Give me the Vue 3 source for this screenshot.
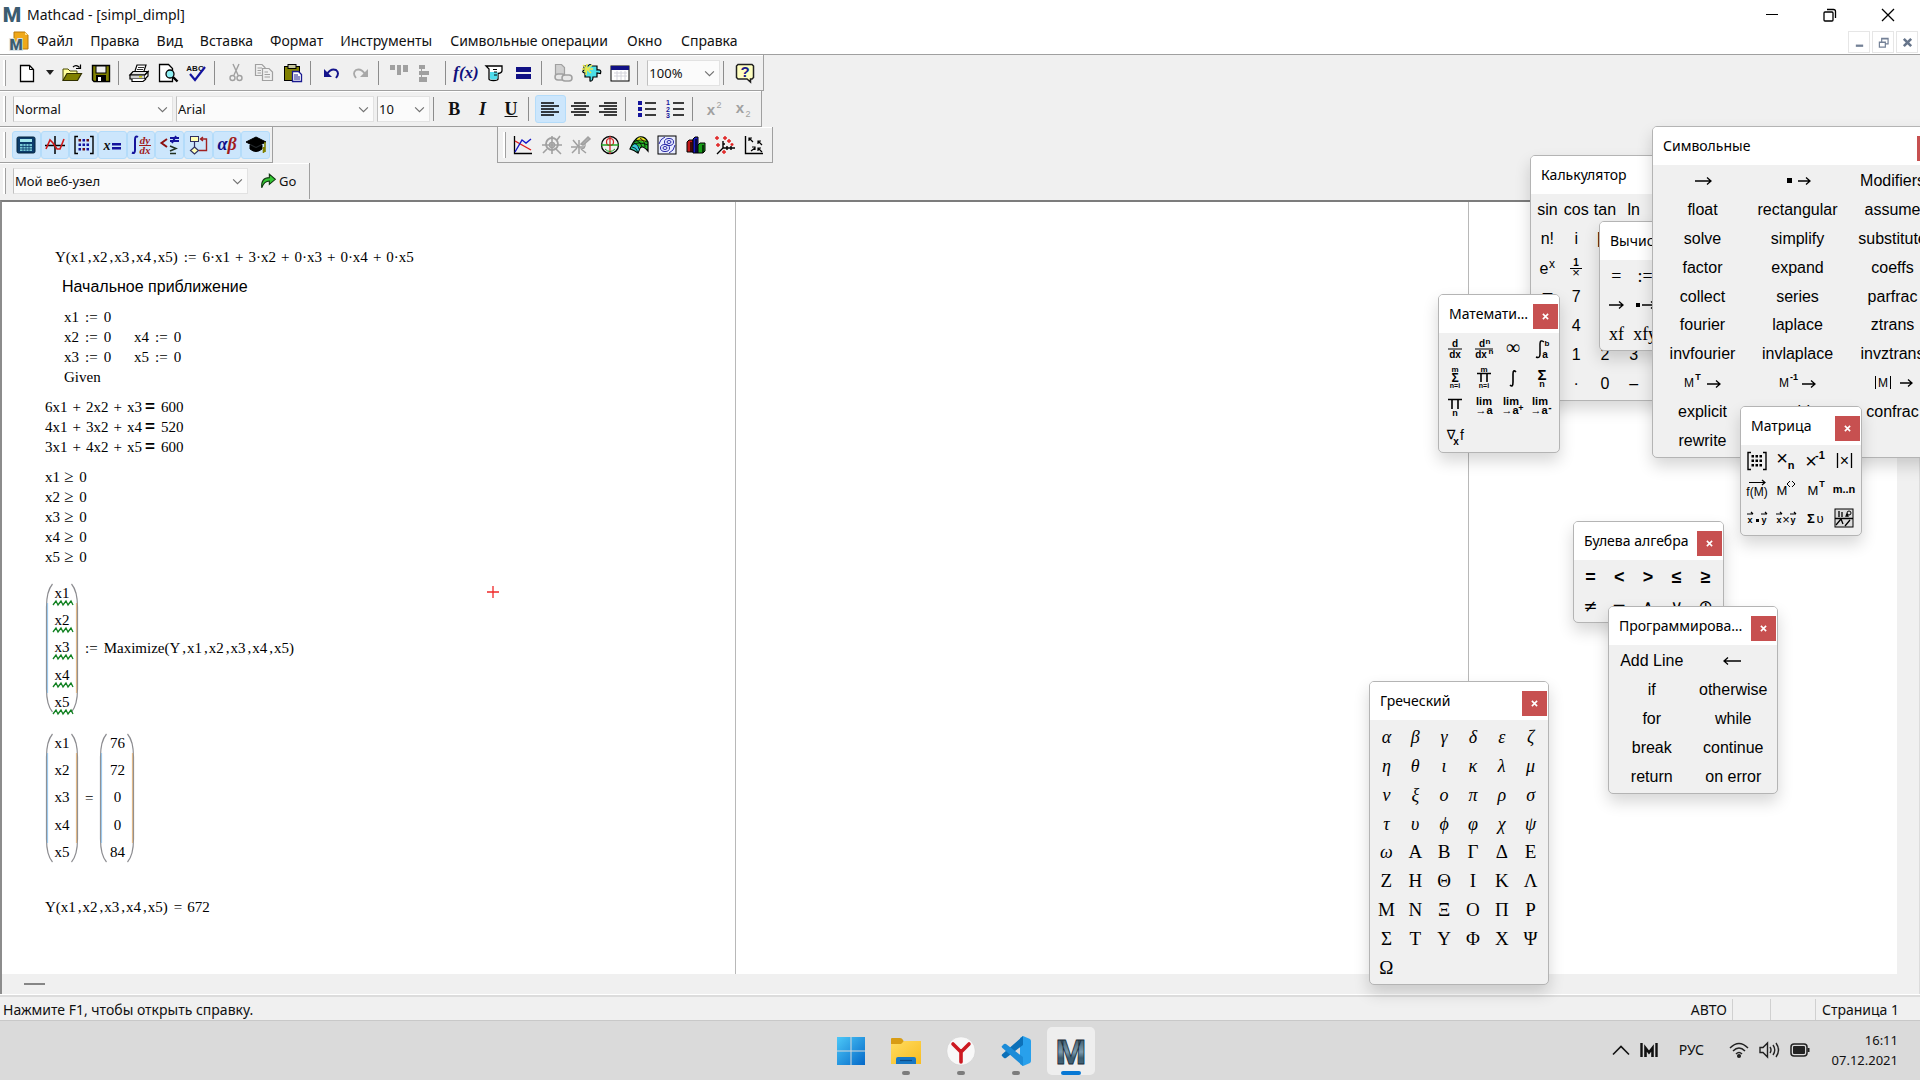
<script setup>
const menus = ['Файл', 'Правка', 'Вид', 'Вставка', 'Формат', 'Инструменты', 'Символьные операции', 'Окно', 'Справка']

/* ---------- icon helpers ---------- */
const t = (x, y, size, text, extra = '') =>
  `<text x="${x}" y="${y}" font-size="${size}" text-anchor="middle" fill="currentColor" ${extra}>${text}</text>`
const p = (d, stroke = '#000', w = 1, fill = 'none') =>
  `<path d="${d}" stroke="${stroke}" stroke-width="${w}" fill="${fill}"/>`
const r = (x, y, w, h, fill, stroke = 'none') =>
  `<rect x="${x}" y="${y}" width="${w}" height="${h}" fill="${fill}" stroke="${stroke}"/>`
const arrow = (x1, x2, y = 10) => {
  const s = Math.sign(x2 - x1)
  return p(`M${x1} ${y}H${x2}M${x2 - 4 * s} ${y - 3.5}L${x2} ${y}L${x2 - 4 * s} ${y + 3.5}`, '#000', 1.3)
}
const sans = 'font-family="Liberation Sans"'
const serif = 'font-family="Liberation Serif"'

const icons = {
  new: p('M3.5 2.5H12.5L16.5 6.5V18.5H3.5Z', '#000', 1.3, '#fff') + p('M12.5 2.5V6.5H16.5'),
  open: p('M1 17V6H6L8 8H15V10', '#4a4a00', 1, '#ffff9c') + p('M1 17.5L5 10.5H19.5L15.5 17.5Z', '#303000', 1.2, '#808000') + p('M11 4Q14 1 17.5 4.5M18.5 1.5V5.5H14', '#000', 1.2),
  save: p('M1.5 2.5H18.5V18.5H3L1.5 17Z', '#000', 1.4, '#808000') + r(5, 3, 10, 7, '#f0f0f0', '#000') + r(5, 12, 10, 6, '#000') + r(7, 14, 3, 4, '#fff'),
  print: p('M6 8L8 2H17L15 8', '#000', 1.2, '#fff') + p('M9 4.5H15M8 6.5H14', '#000', 0.8) + p('M1 12L4 8.5H19L16 12Z', '#000', 1.2, '#e4e4e4') + p('M1 12H16V16H1Z', '#000', 1.2, '#d0d0d0') + p('M16 12L19 8.5V13L16 16M3 16V18.5H14L17 16', '#000', 1.2, '#fff') + r(10, 13, 3, 1.5, '#c8c800'),
  preview: p('M1.5 1.5H10.5L14.5 5.5V18.5H1.5Z', '#000', 1.3, '#fff') + '<circle cx="12" cy="11" r="4" fill="#8ff0f4" stroke="#000" stroke-width="1.3"/>' + p('M15 14L19.5 18.5', '#000', 2.4),
  abc: t(8, 7.5, 8, 'ABC', `${sans} font-weight="700"`) + p('M3 11L8 17L18 4', '#1414a0', 2.2),
  cut: p('M7 1L12 12M13 1L8 12', '#a0a0a0', 1.4) + '<circle cx="6.500" cy="15" r="2.500" fill="none" stroke="#a0a0a0" stroke-width="1.400"/><circle cx="13.500" cy="15" r="2.500" fill="none" stroke="#a0a0a0" stroke-width="1.400"/>',
  copy: p('M1.500 1.500H8L11 4.500V12.500H1.500Z', '#a0a0a0', 1.2) + p('M8.500 5.500H15L18.500 9V17.500H8.500Z', '#a0a0a0', 1.2, '#f0f0f0') + p('M3.500 5H8M3.500 7.500H7M3.500 10H7M10.500 9H14M10.500 11.500H16M10.500 14H16', '#a0a0a0', 1),
  paste: r(1.5, 3.5, 15, 14, '#808000', '#000') + r(5, 1.5, 8, 4, '#c8c8a0', '#000') + p('M9.500 8.500H15.500L18.500 11.500V18.500H9.500Z', '#1a1a90', 1.3, '#fff') + p('M11 12H15M11 14H17M11 16H17', '#1a1a90', 1),
  undo: p('M5 11Q9 5 14 7Q18 10 14 15', '#14148c', 2) + p('M2 6V14H10Z', 'none', 0, '#14148c'),
  redo: p('M15 11Q11 5 6 7Q2 10 6 15', '#a8a8a8', 1.8) + p('M18 6V14H10Z', 'none', 0, '#a8a8a8'),
  alignTop: r(1, 2, 5, 5, '#a0a0a0') + r(8, 2, 4, 10, '#a0a0a0') + r(14, 2, 5, 7, '#a0a0a0'),
  alignLeft: r(1, 2, 6, 4, '#a0a0a0') + r(1, 8, 10, 4, '#a0a0a0') + r(1, 14, 8, 5, '#a0a0a0') + r(3, 6, 1, 8, '#a0a0a0'),
  fx: t(10, 15, 17, 'f(x)', `${serif} font-style="italic" font-weight="700" style="color:#10107c"`),
  cup: p('M1 3H17V7.500Q17 10 13 10.500V16Q13 17.500 8.500 17.500T4 16V6Z', '#000', 1.3, '#fff') + p('M5 9H12.500V15Q12 16.500 8.500 16.500T5 15Z', 'none', 0, '#50dcec') + p('M8 6.500H12M9 9H12M9 12H12', '#000', 1),
  equals: r(2, 4, 15, 5, '#101084') + r(2, 11, 15, 5, '#101084'),
  link: p('M2.500 1.500H8.500L11.500 4.500V11.500H2.500Z', '#a0a0a0', 1.2, '#d0d0d0') + '<rect x="2" y="11" width="10" height="6" rx="3" fill="#e8e8e8" stroke="#a0a0a0" stroke-width="1.500"/><rect x="9" y="12" width="10" height="6" rx="3" fill="#e8e8e8" stroke="#a0a0a0" stroke-width="1.500"/>',
  puzzle: p('M3 3H7Q9 0 11 3H16V7Q21 6 19.500 10.500L16 10V14H12Q12 18.500 9 18V14H4V10Q0 9 3 7Z', '#000', 1.2, '#4ce0e8') + p('M2 2L10 10M6 1L5 12M11 2L3 9M1 6H12', '#e8e850', 1.6),
  table: r(1, 3, 18, 15, '#fff', '#000') + r(1, 3, 18, 4, '#101084') + p('M4 10H17M4 13H17M7 8V17M11 8V17M15 8V17', '#d4d4dc', 1),
  help: '<path d="M3 1.500H17L18.500 3V14.500L17 16H15.500V19L12 16H3L1.500 14.500V3Z" fill="#ffffc0" stroke="#202020" stroke-width="1.500"/>' + t(10, 14, 15, '?', `${sans} font-weight="700" style="color:#1c1c8c"`),
  left: p('M1 4H14M1 7H19M1 10H14M1 13H19M1 16H14', '#000', 1.4),
  center: p('M4 4H16M1 7H19M4 10H16M1 13H19M4 16H16', '#000', 1.4),
  right: p('M6 4H19M1 7H19M6 10H19M1 13H19M6 16H19', '#000', 1.4),
  bullets: r(1, 2, 4, 4, '#14149c') + r(1, 8, 4, 4, '#14149c') + r(1, 14, 4, 4, '#14149c') + p('M8 4H19M8 10H19M8 16H19', '#000', 1.3),
  numbers: t(3, 6, 7, '1', `${sans} font-weight="700" style="color:#14149c"`) + t(3, 12.500, 7, '2', `${sans} font-weight="700" style="color:#14149c"`) + t(3, 19, 7, '3', `${sans} font-weight="700" style="color:#14149c"`) + p('M8 4H19M8 10H19M8 16H19', '#000', 1.3),
  sup: t(8, 16, 15, 'x', `${sans} font-weight="700" style="color:#a0a0a0"`) + t(16, 9, 9, '2', `${sans} style="color:#a0a0a0"`),
  sub: t(8, 14, 15, 'x', `${sans} font-weight="700" style="color:#a0a0a0"`) + t(16, 18, 9, '2', `${sans} style="color:#a0a0a0"`),
  calc: '<rect x="1" y="2" width="18" height="16" rx="1.500" fill="#0c3c6c" stroke="#04243c"/>' + r(4, 4, 12, 3, '#a4e8ec') + r(4, 9, 12, 7, '#78c8d4') + p('M4 11.500H16M4 14H16M7 9V16M10 9V16M13 9V16', '#0c3c6c', 0.8),
  graph: p('M0 10.500H20M10 1V19', '#000', 1.5) + p('M1 14L5 5L8 8L12 14L15 14L19 4', '#d01818', 1.6),
  matrix: p('M4 1.500H1V18.500H4M16 1.500H19V18.500H16', '#000', 1.4) + [4, 8.500, 13].map((y) => [4.500, 8.500, 12.500].map((x, i) => r(x, y, 2.500, 2.500, (i + y) % 2 ? '#14149c' : '#6c1010')).join('')).join(''),
  xeq: t(5, 15, 14, 'x', `${serif} font-style="italic" font-weight="700"`) + r(10, 8, 9, 2.500, '#14149c') + r(10, 12, 9, 2.500, '#14149c'),
  calculus: p('M7 2Q4 0 4 5V15Q4 19 1 17.500', '#14149c', 2) + t(14, 9, 11, 'dy', `${serif} font-style="italic" font-weight="700" style="color:#a01c1c"`) + r(8, 10, 12, 1, '#a01c1c') + t(14, 19, 11, 'dx', `${serif} font-style="italic" font-weight="700" style="color:#a01c1c"`),
  bool: p('M7 4L1.500 8L7 12', '#8c1010', 2) + p('M10 3H19M10 6H19M16 1L12 8', '#14149c', 1.8) + p('M10 11L16 13.500L10 16M10 18.500H16', '#203020', 1.5),
  prog: r(2.5, 1.5, 8, 5, '#ffffb4', '#303060') + p('M6.500 6.500V12', '#303060', 1.2) + p('M6.500 12L10.500 15.500L6.500 19L2.500 15.500Z', '#303060', 1.2, '#ffffb4') + p('M13 4H18.500V15.500H11M15 2L12.500 4L15 6', '#a02020', 1.4),
  greek: t(5.500, 15, 18, 'α', `${serif} font-style="italic" font-weight="700" style="color:#101088"`) + t(15, 15, 18, 'β', `${serif} font-style="italic" font-weight="700" style="color:#a01c1c"`),
  hat: p('M0 7L10 2L20 7L10 12Z', '#000', 1, '#000') + p('M4 10V14Q10 19 16 14V10L10 13Z', '#000', 1, '#000') + p('M19 7V17M17.500 12V18', '#808000', 1.6),
  plot: p('M1.500 1V18.500H19', '#000', 1.3) + p('M2 6L18 15', '#e01818', 1.4) + p('M2 17L9 5L13 8L18 4', '#1818c8', 1.4),
  zoom: '<circle cx="10" cy="9" r="6" fill="none" stroke="#a0a0a0" stroke-width="1.800"/><circle cx="10" cy="10" r="2.500" fill="none" stroke="#a0a0a0" stroke-width="1.500"/>' + p('M0 10H20M10 1V19M1 18L5 14M15 5L18 1M14 14L19 19', '#a0a0a0', 1.6),
  trace: p('M0 12H14M8 5V19M2 5L7 11M1 18L6 13M10 14L15 18', '#a0a0a0', 1.5) + p('M10 9L17 2L19 4L12 10Z', '#a0a0a0', 1.5, '#b0b0b0') + p('M9 13Q15 15 14 8', '#a0a0a0', 1.3),
  polar: '<circle cx="10" cy="10" r="8.500" fill="none" stroke="#000" stroke-width="1.300"/><circle cx="10" cy="7" r="3.500" fill="none" stroke="#d02020" stroke-width="1.200"/>' + p('M1 10H19', '#18a018', 1.4) + p('M10 1V19', '#d02020', 1.2) + p('M5 14Q10 19 15 14', '#18a018', 1),
  surface: p('M1 14Q5 4 10 2Q16 1 19 7L19 16Q14 10 11 13L9 18Q5 15 1 14Z', '#000', 1.2, '#28b428') + p('M9 3Q13 1 17 5L15 7Q11 4 7 6Z', 'none', 0, '#f0e020') + p('M2 13L9 17L11 12L6 8Z', 'none', 0, '#38c8dc') + p('M5 8Q10 10 10 14M7 5Q13 8 13 12M11 3Q16 6 16 12M3 10Q9 6 19 10M5 7Q11 3 18 7M3 12Q7 12 9 17', '#000', 0.8),
  contour: r(1, 1, 18, 18, '#e8ecff', '#000') + '<ellipse cx="12" cy="7" rx="4.500" ry="3.500" fill="none" stroke="#2828a8"/><ellipse cx="12" cy="7" rx="2" ry="1.500" fill="none" stroke="#2828a8"/><ellipse cx="8" cy="13" rx="4.500" ry="3.500" fill="none" stroke="#2828a8"/><ellipse cx="8" cy="13" rx="2" ry="1.500" fill="none" stroke="#2828a8"/>' + p('M2 9Q3 4 8 2M12 18Q17 16 18 10', '#2828a8', 1),
  bars: p('M1 7L3 5H7V17H1Z', '#000', 1, '#c01818') + p('M7 4L9 2H12V18H7Z', '#000', 1, '#1818c0') + p('M12 10L14 8H19V16L17 18H12Z', '#000', 1, '#18a018') + p('M5 7V17M10 4V18M17 10V18', '#000', 1.3),
  scatter: p('M8 6V13L2 19M8 13H20M8 9L10 9M12 11V15M16 11V15', '#000', 1.4) + p('M2 1V5M0 3H4M10 1V5M8 3H12M3 8V12M1 10H5M14 4V8M12 6H16M17 8V11M15.500 9.500H18.500M9 15V19M7 17H11', '#e02020', 1.4),
  vector: p('M1.500 1V18.500H19', '#000', 1.4) + p('M5 3L9 7M5 6V3H8M14 6L18 10M14 9V6H17M11 13L7 16M8 12H11V15M14 13L18 17M14 16V13H17', '#000', 1.2),
  go: p('M2 18Q1 6 11 6V2L18 8L11 14V10Q5 10 2 18Z', '#103810', 1.3, '#34c834')
}

/* small formula glyphs used inside the palettes */
const b = `${sans} font-weight="700"`
const glyphs = {
  arrow: arrow(2, 18),
  back: arrow(18, 1),
  squareArrow: r(-1, 7, 5, 5, '#000') + arrow(10, 22),
  evalArrow: arrow(3, 17),
  evalSquare: r(1, 8, 4, 4, '#000') + arrow(7, 20),
  ddx: t(10, 8, 10, 'd', b) + p('M3 10H17') + t(10, 19, 10, 'dx', b),
  dndx: t(8, 8, 10, 'd', b) + t(14, 5, 8, 'n', b) + p('M1 10H19') + t(7, 19, 10, 'dx', b) + t(17, 15, 8, 'n', b),
  inf: t(10, 15, 20, '∞', serif),
  intab: p('M12 3Q8 0 8 5V15Q8 20 4 18', '#000', 1.5) + t(15, 7, 8, 'b', b) + t(13, 19, 10, 'a', b),
  summn: t(10, 4, 8, 'm', b) + t(10, 14, 12, 'Σ', b) + t(10, 20, 7, 'n=i', b),
  prodmn: t(10, 4, 8, 'm', b) + p('M3 5.500H17M7 5.500V14M13 5.500V14', '#000', 1.6) + t(10, 20, 7, 'n=i', b),
  int: p('M13 4Q10 1 10 6V14Q10 20 7 17', '#000', 1.6),
  sumn: t(10, 12, 15, 'Σ', b) + t(10, 19, 9, 'n', b),
  prodn: p('M3 2.500H17M7 2.500V12M13 2.500V12', '#000', 1.6) + t(10, 19, 9, 'n', b),
  lima: t(10, 8, 11, 'lim', b) + t(10, 17, 11, '→a', b),
  limap: t(8, 8, 11, 'lim', b) + t(7, 17, 11, '→a', b) + t(18, 14, 9, '+', b),
  limam: t(8, 8, 11, 'lim', b) + t(7, 17, 11, '→a', b) + t(18, 14, 10, '-', b),
  nabla: t(6, 13, 13, '∇', 'font-family="DejaVu Sans"') + t(11, 19, 10, 'x', b) + t(17, 14, 14, 'f', sans),
  mat: icons.matrix.replace(/#14149c|#6c1010/g, '#000'),
  xn: t(6, 14, 20, '×', sans) + t(15, 18, 11, 'n', b),
  xinv: t(6, 17, 20, '×', sans) + t(15, 8, 11, '-1', b),
  det: p('M3.500 2V17M17.500 2V17', '#000', 1.3) + t(10.500, 15, 16, '×', sans),
  fm: p('M2 2.500H18M15 0L18 2.500L15 5', '#000', 1.2) + t(10, 16, 12, 'f(M)', sans),
  mcol: t(6, 15, 13, 'M', sans) + p('M14 1L11 4L14 7M16 1L19 4L16 7'),
  mt: t(8, 15, 13, 'M', sans) + t(17, 7, 9, 'T', b),
  mn: t(10, 13, 11, 'm..n', b),
  dot: t(3, 14, 9, 'x', b) + r(9, 10, 3, 3, '#000') + t(17, 14, 9, 'y', b) + p('M0 5H6M14 5H20M4 3L6 5M18 3L20 5', '#000', 1.2),
  cross: t(3, 14, 9, 'x', b) + t(10, 15, 13, '×', sans) + t(17, 14, 9, 'y', b) + p('M0 5H6M14 5H20M4 3L6 5M18 3L20 5', '#000', 1.2),
  sumv: t(6, 14, 13, 'Σ', b) + t(15, 14, 13, 'υ', sans),
  pic: r(1, 0, 18, 18, '#ddd', '#000') + p('M1 9.500H19M2 16L7 10L9 15M11 17L16 11M5 2V8M8 3V8M12 8Q13 2 14 8', '#000', 1.3) + '<circle cx="15" cy="4" r="2" fill="none" stroke="#000"/>',
  ex: t(7, 16, 16, 'e', sans) + t(15, 10, 12, 'x', sans),
  inv: t(10, 8, 10, '1', b) + p('M4 10.500H16') + t(10, 19, 13, '×', sans),
  mtArrow: t(-4, 14, 12, 'M', sans) + t(5, 7, 9, 'T', b) + arrow(14, 27, 11),
  minvArrow: t(-4, 14, 12, 'M', sans) + t(6, 7, 9, '-1', b) + arrow(14, 27, 11),
  mdetArrow: p('M-7.500 3V16M7.500 3V16') + t(0, 14, 12, 'M', sans) + arrow(17, 29)
}

/* ---------- toolbars ---------- */
const standard = ['new', '>', 'open', 'save', '|', 'print', 'preview', 'abc', '|', 'cut', 'copy', 'paste', '|', 'undo', 'redo', '|', 'alignTop', 'alignLeft', '|', 'fx', 'cup', 'equals', '|', 'link', 'puzzle', 'table', '|']
const formatting = ['left', 'center', 'right', '|', 'bullets', 'numbers', '|', 'sup', 'sub']
const mathBar = ['calc', 'graph', 'matrix', 'xeq', 'calculus', 'bool', 'prog', 'greek', 'hat']
const graphBar = ['plot', 'zoom', 'trace', 'polar', 'surface', 'contour', 'bars', 'scatter', 'vector']

/* ---------- worksheet ---------- */
const opClass = { ':=': 'assign', ',': 'comma', '+': 'plus', '=': 'equal', '==': 'bold-equal', '≥': 'gte' }
const parse = (src) =>
  src.split(/(:=|==|[,+=≥])/).map((s) => ({ text: s === '==' ? '=' : s, cls: opClass[s] || '' }))

const regions = [
  { x: 53, y: 45, lines: ['Y(x1,x2,x3,x4,x5):=6·x1+3·x2+0·x3+0·x4+0·x5'] },
  { x: 62, y: 105, lines: ['x1:=0', 'x2:=0', 'x3:=0', 'Given'] },
  { x: 132, y: 125, lines: ['x4:=0', 'x5:=0'] },
  { x: 43, y: 195, lines: ['6x1+2x2+x3==600', '4x1+3x2+x4==520', '3x1+4x2+x5==600'] },
  { x: 43, y: 265, lines: ['x1≥0', 'x2≥0', 'x3≥0', 'x4≥0', 'x5≥0'] },
  { x: 43, y: 695, lines: ['Y(x1,x2,x3,x4,x5)=672'] }
]
const vars = ['x1', 'x2', 'x3', 'x4', 'x5']
const result = ['76', '72', '0', '0', '84']

/* ---------- palettes: entries that start with @ are drawn glyphs ---------- */
const PITCH = 28.8
const words = (s) => s.split(' ')
const palettes = [
  {
    title: 'Калькулятор', x: 1530, y: 155, cols: 5, cell: 1,
    items: words('sin cos tan ln log n! i |x| √ ⁿ√ @ex @inv ( ) x² π 7 8 9 / ∟ 4 5 6 × ÷ 1 2 3 + := · 0 – =')
  },
  {
    title: 'Вычисления', x: 1599, y: 221, cols: 4, cell: 1, kind: 'eval',
    items: words('= := ≡ ← @evalArrow @evalSquare fx xf xf xfy xfy xf')
  },
  {
    title: 'Символьные', x: 1652, y: 126, cols: 3, cell: 3.3,
    items: words('@arrow @squareArrow Modifiers float rectangular assume solve simplify substitute factor expand coeffs collect series parfrac fourier laplace ztrans invfourier invlaplace invztrans @mtArrow @minvArrow @mdetArrow explicit combine confrac rewrite')
  },
  {
    title: 'Математический', x: 1438, y: 294, cols: 4, cell: 1,
    items: words('@ddx @dndx @inf @intab @summn @prodmn @int @sumn @prodn @lima @limap @limam @nabla')
  },
  {
    title: 'Матрица', x: 1740, y: 406, cols: 4, cell: 1,
    items: words('@mat @xn @xinv @det @fm @mcol @mt @mn @dot @cross @sumv @pic')
  },
  {
    title: 'Булева алгебра', x: 1573, y: 521, cols: 5, cell: 1, kind: 'boolean',
    items: words('= < > ≤ ≥ ≠ ¬ ∧ ∨ ⊕')
  },
  {
    title: 'Программирование', x: 1608, y: 606, cols: 2, cell: 2.83,
    items: ['Add Line', '@back', 'if', 'otherwise', 'for', 'while', 'break', 'continue', 'return', 'on error']
  },
  {
    title: 'Греческий', x: 1369, y: 681, cols: 6, cell: 1, kind: 'greek',
    items: words('α β γ δ ε ζ η θ ι κ λ μ ν ξ ο π ρ σ τ υ ϕ φ χ ψ ω Α Β Γ Δ Ε Ζ Η Θ Ι Κ Λ Μ Ν Ξ Ο Π Ρ Σ Τ Υ Φ Χ Ψ Ω')
  }
].map((w) => ({
  ...w,
  width: Math.round(w.cols * w.cell * PITCH) + 7,
  gridHeight: Math.round(Math.ceil(w.items.length / w.cols) * PITCH)
}))
const isLower = (s) => s >= 'α' && s <= 'ϕ'
</script>

<template>
  <div class="app">
    <header class="titlebar">
      <svg class="logo" viewBox="0 0 20 20"><text x="10" y="17" text-anchor="middle" font-family="Roboto" font-weight="900" font-size="21" fill="#3c5c70">M</text></svg>
      <h1>Mathcad - [simpl_dimpl]</h1>
      <div class="win-controls">
        <button aria-label="Свернуть"><svg viewBox="0 0 14 14"><path d="M1 6.500H13" stroke="#000" /></svg></button>
        <button aria-label="Восстановить"><svg viewBox="0 0 14 14" fill="none" stroke="#000" stroke-width="1.300"><rect x="1" y="4" width="9" height="9" rx="1" /><path d="M4 1.500H10.500Q12.500 1.500 12.500 3.500V10" /></svg></button>
        <button aria-label="Закрыть"><svg viewBox="0 0 14 14"><path d="M1 1L13 13M13 1L1 13" stroke="#000" stroke-width="1.300" /></svg></button>
      </div>
    </header>

    <nav class="menubar">
      <svg class="doc-logo" viewBox="0 0 20 20">
        <path d="M5 1H16L19 4V18H5Z" fill="#f0a818" stroke="#b87808" />
        <path d="M16 1V4H19Z" fill="#ffe090" />
        <text x="7" y="19" text-anchor="middle" font-family="Roboto" font-weight="900" font-size="15" fill="#3c5c70" stroke="#d8e0e4" stroke-width="2" paint-order="stroke">M</text>
      </svg>
      <button v-for="m in menus" :key="m" class="menu">{{ m }}</button>
      <div class="mdi-controls">
        <button aria-label="Свернуть документ"><svg viewBox="0 0 12 12"><path d="M2 9.500H10" stroke="#738096" stroke-width="2.500" /></svg></button>
        <button aria-label="Восстановить документ"><svg viewBox="0 0 12 12" fill="none" stroke="#738096" stroke-width="1.300"><path d="M1.500 5.500H8V11H1.500ZM1 6H8M4 5V1.500H11V7.500H8M4 2H11" /></svg></button>
        <button aria-label="Закрыть документ"><svg viewBox="0 0 12 12"><path d="M2 2L10 10M10 2L2 10" stroke="#66748a" stroke-width="2.800" /></svg></button>
      </div>
    </nav>

    <section class="toolbars">
      <div class="bar bar-standard">
        <i class="grip"></i>
        <template v-for="(n, i) in standard" :key="i">
          <i v-if="n === '|'" class="sep"></i>
          <button v-else-if="n === '>'" class="drop" aria-label="Шаблоны"></button>
          <button v-else class="tool" :aria-label="n"><svg viewBox="0 0 20 20" v-html="icons[n]"></svg></button>
        </template>
        <div class="combo zoom-combo">
          <select aria-label="Масштаб"><option>100%</option></select>
          <svg viewBox="0 0 12 8"><path d="M1 1.500L6 6.500L11 1.500" /></svg>
        </div>
        <i class="sep"></i>
        <button class="tool" aria-label="Помощь"><svg viewBox="0 0 20 20" v-html="icons.help"></svg></button>
      </div>

      <div class="bar bar-format">
        <i class="grip"></i>
        <div class="combo style-combo">
          <select aria-label="Стиль"><option>Normal</option></select>
          <svg viewBox="0 0 12 8"><path d="M1 1.500L6 6.500L11 1.500" /></svg>
        </div>
        <div class="combo font-combo">
          <select aria-label="Шрифт"><option>Arial</option></select>
          <svg viewBox="0 0 12 8"><path d="M1 1.500L6 6.500L11 1.500" /></svg>
        </div>
        <div class="combo size-combo">
          <select aria-label="Размер"><option>10</option></select>
          <svg viewBox="0 0 12 8"><path d="M1 1.500L6 6.500L11 1.500" /></svg>
        </div>
        <i class="sep"></i>
        <button class="tool letter">B</button>
        <button class="tool letter italic">I</button>
        <button class="tool letter underline">U</button>
        <i class="sep"></i>
        <template v-for="(n, i) in formatting" :key="i">
          <i v-if="n === '|'" class="sep"></i>
          <button v-else class="tool" :class="{ on: n === 'left' }" :aria-label="n"><svg viewBox="0 0 20 20" v-html="icons[n]"></svg></button>
        </template>
      </div>

      <div class="bar-row">
        <div class="bar bar-math">
          <i class="grip"></i>
          <button v-for="n in mathBar" :key="n" class="tool on" :aria-label="n"><svg viewBox="0 0 20 20" v-html="icons[n]"></svg></button>
        </div>
        <div class="bar bar-graph">
          <i class="grip"></i>
          <button v-for="n in graphBar" :key="n" class="tool" :aria-label="n"><svg viewBox="0 0 20 20" v-html="icons[n]"></svg></button>
        </div>
      </div>

      <div class="bar bar-web">
        <i class="grip"></i>
        <div class="combo web-combo">
          <select aria-label="Веб-узел"><option>Мой веб-узел</option></select>
          <svg viewBox="0 0 12 8"><path d="M1 1.500L6 6.500L11 1.500" /></svg>
        </div>
        <button class="go"><svg viewBox="0 0 20 20" v-html="icons.go"></svg>Go</button>
      </div>
    </section>

    <main class="document">
      <div class="sheet">
        <div class="page first"></div>
        <div class="page"></div>

        <div v-for="(g, i) in regions" :key="i" class="region" :style="{ left: g.x + 'px', top: g.y + 'px' }">
          <p v-for="l in g.lines" :key="l"><span v-for="(k, j) in parse(l)" :key="j" :class="k.cls">{{ k.text }}</span></p>
        </div>
        <p class="region note">Начальное приближение</p>

        <div class="region matrix-row solve">
          <div class="matrix">
            <svg class="paren" viewBox="0 0 8 130"><path d="M7.500 1Q1.500 8 1.500 24V106Q1.500 122 7.500 129" /><path class="tint" d="M2.500 20V110" /></svg>
            <div class="column">
              <span v-for="v in vars" :key="v" class="wavy">{{ v }}<svg viewBox="0 0 22 6"><path d="M1 5L4 1L6 5L9 1L11 5L14 1L16 5L19 1L21 5" /></svg></span>
            </div>
            <svg class="paren" viewBox="0 0 8 130"><path d="M0.500 1Q6.500 8 6.500 24V106Q6.500 122 0.500 129" /><path class="tint warm" d="M5.500 20V110" /></svg>
          </div>
          <p><span v-for="(k, j) in parse(':=Maximize(Y,x1,x2,x3,x4,x5)')" :key="j" :class="k.cls">{{ k.text }}</span></p>
        </div>

        <div class="region matrix-row answer">
          <div v-for="(col, i) in [vars, result]" :key="i" class="answer-part">
            <p v-if="i" class="answer-equal">=</p>
            <div class="matrix">
              <svg class="paren" viewBox="0 0 8 130"><path d="M7.500 1Q1.500 8 1.500 24V106Q1.500 122 7.500 129" /><path class="tint" d="M2.500 20V110" /></svg>
              <div class="column" :class="{ values: i }"><span v-for="(v, j) in col" :key="j">{{ v }}</span></div>
              <svg class="paren" viewBox="0 0 8 130"><path d="M0.500 1Q6.500 8 6.500 24V106Q6.500 122 0.500 129" /><path class="tint warm" d="M5.500 20V110" /></svg>
            </div>
          </div>
        </div>

        <svg class="crosshair" viewBox="0 0 12 12"><path d="M6 0V12M0 6H12" stroke="#f02828" stroke-width="1.300" /></svg>
      </div>
      <div class="hscroll"><i></i></div>
    </main>

    <footer class="status">
      <span class="hint">Нажмите F1, чтобы открыть справку.</span>
      <span class="auto">АВТО</span>
      <span class="box"></span>
      <span class="box wide"></span>
      <span class="page-no">Страница 1</span>
    </footer>

    <div class="taskbar">
      <div class="apps">
        <button class="app-tile" aria-label="Пуск">
          <svg viewBox="0 0 30 30">
            <defs><linearGradient id="win" x1="0" y1="0" x2="1" y2="1"><stop offset="0" stop-color="#4cc8f8" /><stop offset="1" stop-color="#0468c8" /></linearGradient></defs>
            <path d="M1 1H14.500V14.500H1ZM15.500 1H29V14.500H15.500ZM1 15.500H14.500V29H1ZM15.500 15.500H29V29H15.500Z" fill="url(#win)" />
          </svg>
        </button>
        <button class="app-tile running" aria-label="Проводник">
          <svg viewBox="0 0 30 30">
            <defs><linearGradient id="fold" x1="0" y1="0" x2="1" y2="1"><stop offset="0" stop-color="#ffdc60" /><stop offset="1" stop-color="#f8bc20" /></linearGradient></defs>
            <path d="M0 3Q0 2 1 2H9Q11 2 12 4L13 6V10H0Z" fill="#d89c14" />
            <path d="M0 8H10L13 5H30V28H0Z" fill="url(#fold)" />
            <path d="M5 28V23Q5 21 7 21H23Q25 21 25 23V28Z" fill="#1878c4" />
            <path d="M9 24.500H21" stroke="#0c4c88" stroke-width="1.200" />
          </svg>
        </button>
        <button class="app-tile running" aria-label="Яндекс Браузер">
          <svg viewBox="0 0 30 30">
            <circle cx="15" cy="15" r="14.200" fill="#f8f8f8" stroke="#c8c8c8" stroke-width="0.500" />
            <path d="M7 8L15 16L23 8M15 15V26" fill="none" stroke="#cc1820" stroke-width="3.600" stroke-linecap="round" />
          </svg>
        </button>
        <button class="app-tile running" aria-label="Visual Studio Code">
          <svg viewBox="0 0 30 30">
            <path d="M22 0L29 3Q30 4 30 5V25Q30 26 29 27L22 30L19 28V2Z" fill="#28a0ec" />
            <path d="M22 0L2 17.500Q0 19 1 20L3 22Q4 22.500 5 22L22 9Z" fill="#0c70b8" />
            <path d="M22 30L2 12.500Q0 11 1 10L3 8Q4 7.500 5 8L22 21Z" fill="#1c8cd8" />
          </svg>
        </button>
        <button class="app-tile active" aria-label="Mathcad">
          <svg viewBox="0 0 30 30">
            <defs><linearGradient id="steel" x1="0" y1="0" x2="0" y2="1"><stop offset="0" stop-color="#203848" /><stop offset="0.500" stop-color="#7c9cb0" /><stop offset="0.650" stop-color="#3c5c70" /><stop offset="1" stop-color="#486c84" /></linearGradient></defs>
            <text x="15" y="28" text-anchor="middle" font-family="Roboto" font-weight="900" font-size="34" fill="url(#steel)" stroke="#182c38" stroke-width="0.800">M</text>
          </svg>
        </button>
      </div>
      <div class="tray">
        <button aria-label="Скрытые значки"><svg width="18" height="12" viewBox="0 0 18 12"><path d="M1 10.500L9 2.500L17 10.500" fill="none" stroke="#111" stroke-width="1.600" /></svg></button>
        <button class="tray-m" aria-label="Монитор"><svg width="18" height="14" viewBox="0 0 18 14"><path d="M1.500 0V14M16.500 0V14" stroke="#111" stroke-width="2.400" /><path d="M5.500 14V5L9 9.500L12.500 5V14" fill="none" stroke="#111" stroke-width="2.600" /></svg></button>
        <button class="lang">РУС</button>
        <button class="net" aria-label="Сеть и звук">
          <svg width="20" height="16" viewBox="0 0 20 16" fill="none" stroke="#222" stroke-width="1.500"><path d="M1 6Q10 -3 19 6M4 9Q10 3 16 9M7 12Q10 9 13 12" /><circle cx="10" cy="14" r="1.300" fill="#222" /></svg>
          <svg width="21" height="18" viewBox="0 0 21 18" fill="none" stroke="#222" stroke-width="1.400"><path d="M1 6.500H4L8.500 2V16L4 11.500H1ZM11 6Q13 9 11 12M14 4Q17.500 9 14 14M17 2Q22 9 17 16" /></svg>
          <svg width="20" height="14" viewBox="0 0 20 14"><rect x="1" y="1" width="16" height="12" rx="3" fill="none" stroke="#222" stroke-width="1.500" /><rect x="3" y="3" width="12" height="8" rx="1" fill="#222" /><path d="M18.500 5V9" stroke="#222" stroke-width="2" /></svg>
        </button>
        <div class="clock"><time>16:11</time><time>07.12.2021</time></div>
      </div>
    </div>

    <section v-for="w in palettes" :key="w.title" class="palette" :class="w.kind" :style="{ left: w.x + 'px', top: w.y + 'px', width: w.width + 'px' }">
      <header>
        <h2>{{ w.title }}</h2>
        <button class="close" aria-label="Закрыть"><svg viewBox="0 0 8 8"><path d="M1 1L7 7M7 1L1 7" stroke="#fff" stroke-width="1.800" /></svg></button>
      </header>
      <div class="cells" :style="{ height: w.gridHeight + 'px', gridTemplateColumns: `repeat(${w.cols}, 1fr)` }">
        <button v-for="(c, i) in w.items" :key="i" :class="{ lower: isLower(c) }">
          <svg v-if="c[0] === '@'" viewBox="0 0 20 20" v-html="glyphs[c.slice(1)]"></svg>
          <template v-else>{{ c }}</template>
        </button>
      </div>
    </section>
  </div>
</template>

<style>
body {
  margin: 0;
}
</style>

<style scoped>
.app {
  position: relative;
  display: flex;
  flex-direction: column;
  min-height: 100vh;
  overflow: hidden;
  background: #f0f0f0;
  color: #111;
  font: 14px/20px 'Noto Sans', 'Open Sans', sans-serif;
}
h1, h2, p {
  margin: 0;
  font-weight: 400;
}
button, select {
  margin: 0;
  padding: 0;
  border: 0;
  background: none;
  color: inherit;
  font: inherit;
}
svg {
  display: block;
  overflow: visible;
}

/* title and menu */
.titlebar {
  display: flex;
  align-items: center;
  height: 28px;
  padding: 1px 0 0 2px;
  box-sizing: border-box;
  background: #fff;
}
.logo {
  width: 20px;
  height: 20px;
}
.titlebar h1 {
  margin-left: 5px;
  font-size: 14px;
}
.win-controls {
  display: flex;
  margin-left: auto;
}
.win-controls button {
  display: flex;
  justify-content: center;
  width: 58px;
}
.win-controls button:last-child {
  margin-right: 3px;
}
.win-controls svg {
  width: 14px;
  height: 14px;
}
.menubar {
  display: flex;
  align-items: center;
  height: 27px;
  padding-left: 9px;
  box-sizing: border-box;
  border-bottom: 1px solid #a0a0a0;
  background: #fff;
}
.doc-logo {
  width: 20px;
  height: 20px;
}
.menu {
  padding: 0 9px 0 8px;
}
.menu:nth-of-type(n + 7) {
  padding: 0 10px 0 9px;
}
.mdi-controls {
  display: flex;
  gap: 2px;
  margin: 2px 2px 0 auto;
}
.mdi-controls button {
  display: flex;
  align-items: center;
  justify-content: center;
  width: 22px;
  height: 22px;
  box-sizing: border-box;
  border: 1px solid #e6e6e6;
}
.mdi-controls svg {
  width: 11px;
  height: 11px;
}

/* toolbars */
.toolbars {
  display: flex;
  flex-direction: column;
  align-items: flex-start;
  padding-bottom: 1px;
}
.bar {
  display: flex;
  align-items: center;
  height: 36px;
  box-sizing: border-box;
  border-right: 1px solid #a0a0a0;
  border-bottom: 1px solid #a0a0a0;
  box-shadow: inset 0 1px #fff;
}
.bar-standard {
  width: 764px;
  padding-right: 4px;
}
.bar-format {
  width: 762px;
  padding-right: 5px;
}
.bar-row {
  display: flex;
  gap: 224px;
}
.bar-math {
  width: 273px;
  padding-right: 2px;
}
.bar-graph {
  width: 276px;
  padding-right: 4px;
  border-left: 1px solid #a0a0a0;
}
.bar-web {
  width: 310px;
  border-bottom: 0;
}
.grip {
  flex: none;
  width: 2px;
  height: 26px;
  margin: 0 6px 0 3px;
  border-right: 1px solid #a0a0a0;
  background: #fff;
}
.bar-standard .grip, .bar-format .grip, .bar-web .grip {
  margin-right: 7px;
}
.bar-graph .grip {
  margin: 0 3px 0 5px;
}
.sep {
  flex: none;
  width: 1px;
  height: 24px;
  margin: 0 6px 0 3px;
  background: #8c8c8c;
}
.tool {
  display: flex;
  flex: 1;
  align-items: center;
  justify-content: center;
  min-width: 0;
  height: 28px;
  box-sizing: border-box;
}
.tool svg {
  flex: none;
  width: 20px;
  height: 20px;
}
.tool.on {
  border: 1px solid #b4dcfa;
  border-radius: 3px;
  background: #cce6fc;
}
.drop {
  width: 16px;
  height: 28px;
}
.drop::after {
  content: '';
  display: block;
  width: 0;
  margin: 0 auto;
  border: 4px solid transparent;
  border-top: 5px solid #202020;
  border-bottom: 0;
}
.letter {
  font: 700 18px/24px 'Liberation Serif', serif;
}
.italic {
  font-style: italic;
}
.underline {
  text-decoration: underline;
}
.combo {
  position: relative;
  flex: none;
  height: 26px;
  border: 1px solid #e2e2e2;
  border-left-color: #c0c0c0;
  box-sizing: border-box;
  background: #fbfbfb;
}
.combo select {
  width: 100%;
  height: 24px;
  padding-left: 1px;
  appearance: none;
  font-size: 13px;
}
.combo svg {
  position: absolute;
  top: 9px;
  right: 4px;
  width: 11px;
  height: 7px;
  fill: none;
  stroke: #707070;
  stroke-width: 1.3;
  pointer-events: none;
}
.zoom-combo {
  width: 73px;
  margin-left: 3px;
}
.style-combo {
  width: 160px;
  margin-right: 3px;
}
.font-combo {
  width: 198px;
  margin-right: 3px;
}
.size-combo {
  width: 53px;
}
.web-combo {
  width: 235px;
}
.go {
  display: flex;
  align-items: center;
  gap: 2px;
  margin-left: 12px;
  font-size: 13px;
}
.go svg {
  width: 17px;
  height: 18px;
}

/* worksheet */
.document {
  display: flex;
  flex: 1;
  flex-direction: column;
  box-sizing: border-box;
  border-top: 2px solid #7c7c7c;
  border-left: 2px solid #8c8c8c;
  border-right: 1px solid #dcdcdc;
}
.sheet {
  position: relative;
  display: flex;
  flex: 1;
  margin-right: 22px;
  background: #fff;
}
.page {
  width: 733px;
  box-sizing: border-box;
  border-right: 1px solid #b8b8b8;
}
.first {
  width: 734px;
}
.region {
  position: absolute;
  color: #000;
  font: 15px/20px 'Liberation Serif', 'Times New Roman', serif;
  white-space: nowrap;
}
.note {
  left: 60px;
  top: 75px;
  font: 16px/20px 'Liberation Sans', Arial, sans-serif;
}
.comma {
  margin: 0 1px 0 2px;
}
.assign {
  margin: 0 6px;
}
.plus {
  margin: 0 5px;
}
.equal {
  margin: 0 5px 0 6px;
}
.bold-equal {
  margin: 0 6px 0 3px;
  font: 700 17px/16px 'Liberation Sans', sans-serif;
}
.gte {
  margin: 0 6px 0 4px;
  font-size: 17px;
  line-height: 16px;
}
.matrix-row {
  display: flex;
  align-items: center;
  left: 43px;
}
.solve {
  top: 377px;
}
.answer {
  top: 527px;
}
.answer-part {
  display: flex;
  align-items: center;
}
.matrix {
  display: flex;
  align-items: center;
}
.column {
  display: grid;
  grid-template-rows: repeat(5, 1fr);
  min-width: 18px;
  height: 137px;
  place-items: center;
}
.values {
  min-width: 20px;
}
.paren {
  width: 8px;
  height: 130px;
  fill: none;
  stroke: #8c8c90;
  stroke-width: 1.2;
}
.paren .tint {
  stroke: #9cc8ec;
}
.paren .tint.warm {
  stroke: #e0b888;
}
.wavy {
  position: relative;
}
.wavy svg {
  position: absolute;
  left: -3px;
  top: 17px;
  width: 22px;
  height: 6px;
  fill: none;
  stroke: #108020;
  stroke-width: 1.3;
}
.answer-equal {
  margin: 0 6px;
}
.crosshair {
  position: absolute;
  left: 485px;
  top: 384px;
  width: 12px;
  height: 12px;
}
.hscroll {
  display: flex;
  align-items: center;
  height: 20px;
  padding: 0 22px;
}
.hscroll i {
  width: 21px;
  height: 2px;
  background: #868686;
}

/* status bar */
.status {
  display: flex;
  height: 26px;
  box-sizing: border-box;
  padding: 4px 0 0 3px;
  border-top: 1px solid #fff;
  box-shadow: inset 0 2px #dcdcdc;
  line-height: 22px;
}
.hint {
  flex: 1;
}
.auto {
  padding-right: 5px;
}
.box {
  width: 38px;
  box-sizing: border-box;
  border-left: 1px solid #d0d0d0;
}
.wide {
  width: 45px;
}
.page-no {
  width: 105px;
  padding-left: 6px;
  box-sizing: border-box;
  border-left: 1px solid #d0d0d0;
}

/* taskbar */
.taskbar {
  display: grid;
  grid-template-columns: 1fr auto 1fr;
  align-items: center;
  height: 60px;
  box-sizing: border-box;
  border-top: 1px solid #c8c8c8;
  background: #dadada;
}
.apps {
  display: flex;
  grid-column: 2;
  gap: 7px;
  padding-left: 2px;
}
.app-tile {
  position: relative;
  display: flex;
  align-items: center;
  justify-content: center;
  width: 48px;
  height: 48px;
  border-radius: 5px;
}
.app-tile svg {
  width: 30px;
  height: 30px;
}
.running::after, .active::after {
  content: '';
  position: absolute;
  bottom: 0;
  width: 8px;
  height: 4px;
  border-radius: 2px;
  background: #7c7c7c;
}
.active {
  background: #eeeeee;
}
.active::after {
  width: 20px;
  background: #0878d4;
}
.tray {
  display: flex;
  align-items: center;
  justify-content: flex-end;
  padding: 0 22px 2px 0;
}
.tray-m {
  margin: 0 21px 0 10px;
}
.lang {
  margin-right: 25px;
}
.net {
  display: flex;
  align-items: center;
  gap: 10px;
}
.clock {
  display: flex;
  flex-direction: column;
  align-items: flex-end;
  width: 88px;
  font-size: 13px;
}

/* palettes */
.palette {
  position: absolute;
  box-sizing: border-box;
  border: 1px solid #b4b4b4;
  border-radius: 5px;
  background: #f0f0f0;
  box-shadow: 0 8px 16px rgba(0, 0, 0, 0.16);
  color: #000;
}
.palette header {
  display: flex;
  height: 38px;
  padding: 0 1px 0 10px;
  border-radius: 4px 4px 0 0;
  background: #fff;
}
.palette h2 {
  flex: 1;
  min-width: 0;
  overflow: hidden;
  font-size: 14px;
  line-height: 38px;
  text-overflow: ellipsis;
  white-space: nowrap;
}
.close {
  display: flex;
  flex: none;
  align-items: center;
  justify-content: center;
  width: 25px;
  height: 25px;
  margin: 9px 0 0 4px;
  background: #c75050;
}
.close svg {
  width: 7px;
  height: 7px;
}
.cells {
  display: grid;
  grid-auto-rows: 1fr;
  padding: 2px 3px 2px 2px;
}
.cells button {
  display: flex;
  align-items: center;
  justify-content: center;
  min-width: 0;
  font: 16px/20px 'Liberation Sans', 'DejaVu Sans', sans-serif;
  white-space: nowrap;
}
.cells svg {
  width: 20px;
  height: 20px;
}
.eval .cells button {
  font: 18px/20px 'Liberation Serif', 'DejaVu Sans', serif;
}
.greek .cells {
  padding-top: 3px;
}
.greek .cells button {
  font: 19px/20px 'Liberation Serif', serif;
}
.greek .cells .lower {
  font-size: 18px;
  font-style: italic;
}
.boolean .cells button {
  font-weight: 700;
  font-size: 18px;
}
.boolean .cells button:nth-child(n + 6) {
  font: 17px/20px 'DejaVu Sans', sans-serif;
}
</style>
